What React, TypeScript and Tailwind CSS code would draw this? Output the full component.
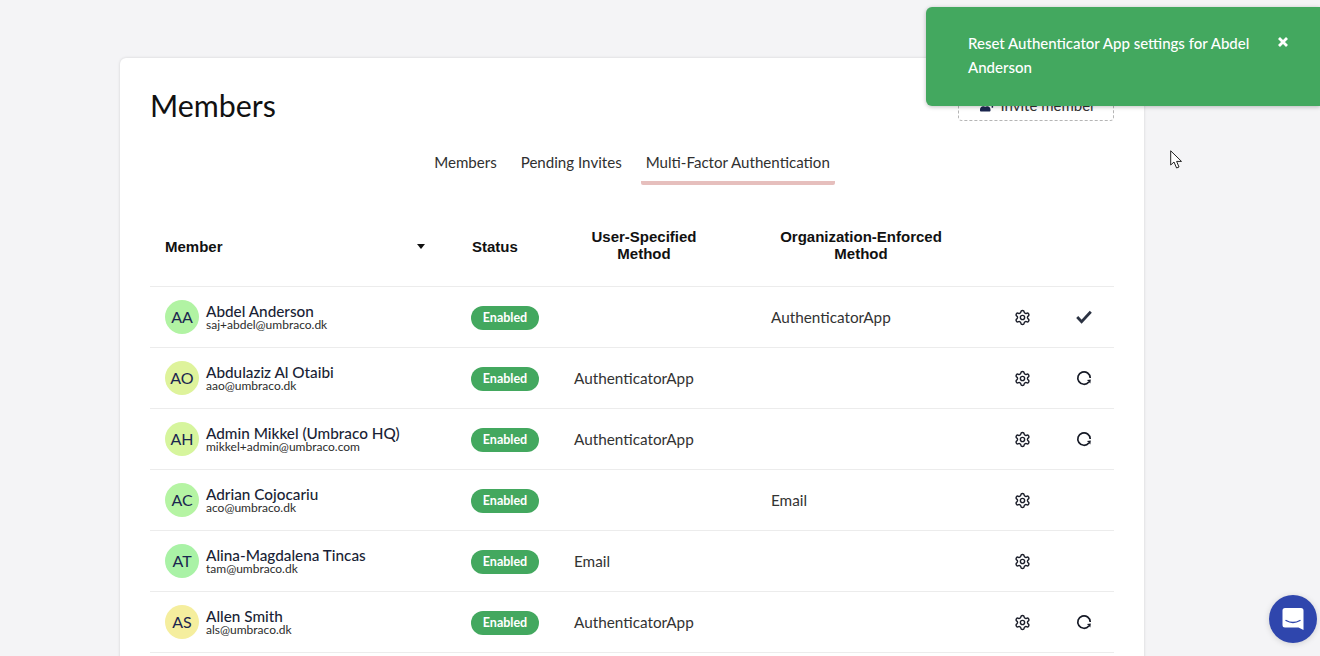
import { Settings } from "lucide-react";
import { FaUserPlus } from "react-icons/fa";

const members = [
  { initials: "AA", color: "bg-[#b1f3a3]", name: "Abdel Anderson", email: "saj+abdel@umbraco.dk", user: "", org: "AuthenticatorApp", action: "check" },
  { initials: "AO", color: "bg-[#def39b]", name: "Abdulaziz Al Otaibi", email: "aao@umbraco.dk", user: "AuthenticatorApp", org: "", action: "reset" },
  { initials: "AH", color: "bg-[#d6f59d]", name: "Admin Mikkel (Umbraco HQ)", email: "mikkel+admin@umbraco.com", user: "AuthenticatorApp", org: "", action: "reset" },
  { initials: "AC", color: "bg-[#b5f4a3]", name: "Adrian Cojocariu", email: "aco@umbraco.dk", user: "", org: "Email", action: "" },
  { initials: "AT", color: "bg-[#a9f2a6]", name: "Alina-Magdalena Tincas", email: "tam@umbraco.dk", user: "Email", org: "", action: "" },
  { initials: "AS", color: "bg-[#f5ee9e]", name: "Allen Smith", email: "als@umbraco.dk", user: "AuthenticatorApp", org: "", action: "reset" },
];

const CheckIcon = () => (
  <svg width="16" height="16" viewBox="0 0 16 16" fill="none">
    <path d="M1.2 8 L5.6 12.6 L14.8 2.8" stroke="#2b3242" strokeWidth="2.8" />
  </svg>
);

const ResetIcon = () => (
  <svg width="16" height="16" viewBox="0 0 16 16" fill="none">
    <path d="M12.8 12 A6.2 6.2 0 1 1 14.2 8" stroke="#161a26" strokeWidth="1.7" />
    <path d="M11 10 L14.8 9.6 L14.3 13.4 Z" fill="#161a26" />
  </svg>
);

export default function App() {
  return (
    <div className="relative h-[656px] overflow-hidden bg-[#f4f4f6] pt-[58px] font-['Lato',sans-serif] text-[#1b264f]">
      <div className="ml-[120px] h-[640px] w-[1024px] rounded-t-md bg-white px-[30px] shadow-[0_0_3px_rgba(0,0,0,0.15)]">
        <div className="flex items-start justify-between">
          <h1 className="pt-[27px] text-[30.4px] leading-[40px] font-normal text-[#111]">Members</h1>
          <button className="mt-[32px] flex h-[31px] w-[156px] items-center justify-center gap-[5px] rounded-sm border border-dashed border-[#b5b5b5] pl-[4px] text-[15px] text-[#333]">
            <FaUserPlus size={15} className="text-[#1b264f]" />
            Invite member
          </button>
        </div>

        <div className="mt-[24px] flex justify-center pl-[1px] text-[15.1px] text-[#303030]">
          <div className="mr-[16px] px-[4px] pb-[9px] leading-[26px]">Members</div>
          <div className="mr-[15px] px-[4px] pb-[9px] leading-[26px]">Pending Invites</div>
          <div className="rounded-[2px] border-b-[4px] border-[#e6bfbd] px-[5px] pb-[6px] leading-[26px]">Multi-Factor Authentication</div>
        </div>

        <div className="mt-[20px] grid h-[82px] grid-cols-[306px_103px_197px_235px_62px_61px] items-center border-b border-[#ececec] font-['Liberation_Sans',sans-serif] text-[15px] leading-[17px] font-bold text-[#111]">
          <div className="mt-[1px] flex items-center justify-between pr-[31px] pl-[15px]">
            Member
            <span className="h-0 w-0 border-x-[4px] border-t-[5px] border-x-transparent border-t-[#111]" />
          </div>
          <div className="mt-[1px] pl-[16px]">Status</div>
          <div className="-mt-[2px] w-[170px] text-center">User-Specified<br />Method</div>
          <div className="-mt-[2px] w-[210px] text-center">Organization-Enforced<br />Method</div>
        </div>

        {members.map((m) => (
          <div key={m.email} className="grid h-[61px] grid-cols-[306px_103px_197px_235px_62px_61px] items-center border-b border-[#ececec] text-[15.3px]">
            <div className="flex items-center gap-[7px] pl-[15px]">
              <div className={`flex h-[34px] w-[34px] items-center justify-center rounded-full text-[16px] ${m.color}`}>{m.initials}</div>
              <div>
                <div className="mt-[1px] text-[15.3px] leading-[14px] font-medium text-[#1a1f36]">{m.name}</div>
                <div className="pt-[1px] text-[12px] leading-[12px] text-[#2c2c2c]">{m.email}</div>
              </div>
            </div>
            <div className="pl-[15px]">
              <span className="mt-[2px] flex h-[24px] w-[68px] items-center justify-center rounded-full bg-[#43a85f] text-[12.5px] font-bold text-white">Enabled</span>
            </div>
            <div className="pl-[15px] text-[#333]">{m.user}</div>
            <div className="pl-[15px] text-[#333]">{m.org}</div>
            <div className="flex justify-center">
              <Settings size={17} strokeWidth={2} className="text-[#1c1f2b]" />
            </div>
            <div className="flex justify-center">
              {m.action === "check" && <CheckIcon />}
              {m.action === "reset" && <ResetIcon />}
            </div>
          </div>
        ))}
      </div>

      {/* toast sits over the card */}
      <div className="absolute top-[7px] right-0 flex h-[99px] w-[394px] rounded-l-md bg-[#43a85f] pt-[24px] pl-[42px] text-white shadow-[0_1px_4px_rgba(0,0,0,0.25)]">
        <div className="w-[300px] text-[15px] leading-[24px] font-medium">Reset Authenticator App settings for Abdel Anderson</div>
        <svg width="10" height="10" viewBox="0 0 10 10" className="mt-[6px] ml-[10px]">
          <path d="M1 1 L9 9 M9 1 L1 9" stroke="white" strokeWidth="2.8" />
        </svg>
      </div>

      {/* mouse pointer */}
      <svg width="14" height="20" viewBox="0 0 14 20" className="absolute top-[150px] left-[1170px]">
        <path d="M0.7 0.8 V15 L4 12 L6.6 18 L9 17 L6.6 11.4 H11.5 Z" fill="white" stroke="#222" strokeWidth="1" />
      </svg>

      {/* chat launcher */}
      <div className="absolute top-[595px] left-[1269px] flex h-[48px] w-[48px] items-center justify-center rounded-full bg-[#2f46ad] shadow-[0_1px_6px_rgba(0,0,0,0.15)]">
        <svg width="22" height="24" viewBox="0 0 22 24">
          <path d="M3 1 H19 A2.5 2.5 0 0 1 21.5 3.5 V23 L16.5 20.5 H3 A2.5 2.5 0 0 1 0.5 18 V3.5 A2.5 2.5 0 0 1 3 1 Z" fill="white" />
          <path d="M4 13.5 Q11 17.5 18 13.5" stroke="#2f46ad" strokeWidth="1.4" fill="none" strokeLinecap="round" />
        </svg>
      </div>
    </div>
  );
}
